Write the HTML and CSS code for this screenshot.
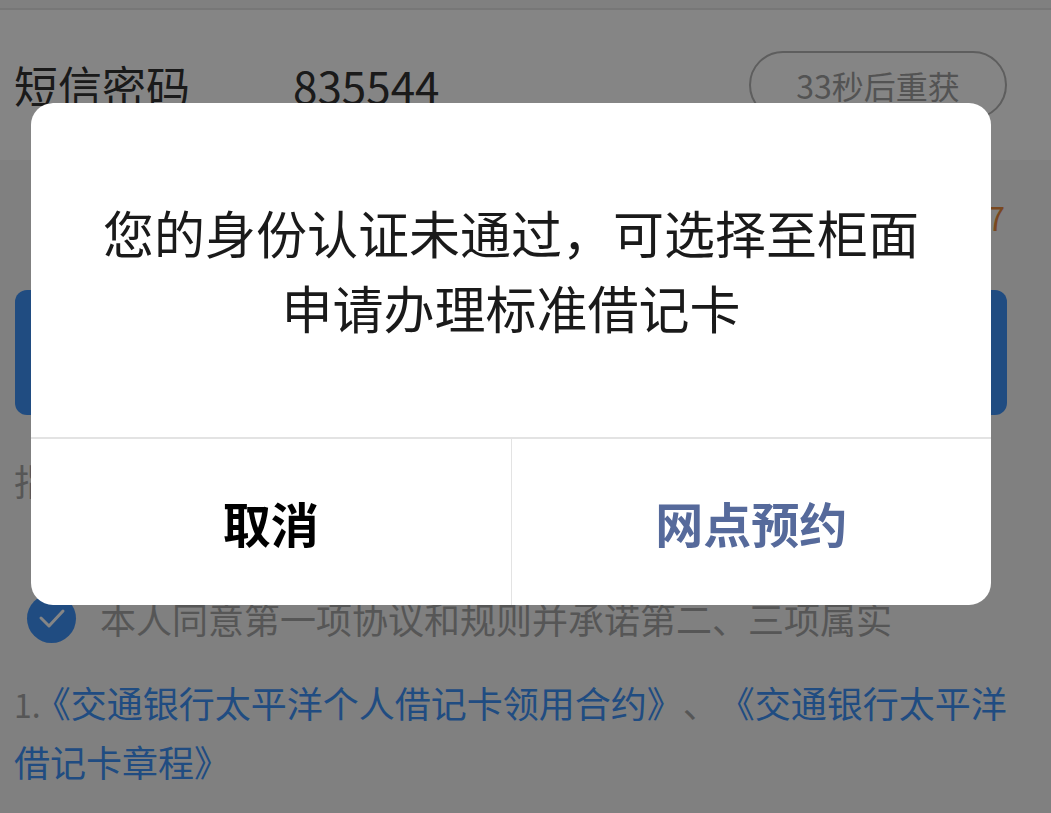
FILE: index.html
```html
<!DOCTYPE html>
<html lang="zh-CN">
<head>
    <meta charset="UTF-8">
    <meta name="viewport" content="width=device-width, initial-scale=1.0">
    <title>身份认证</title>
    <link rel="stylesheet" href="styles.css">
</head>
<body>
    <div class="status"></div>

    <div class="sms-row">
        <span class="sms-label">短信密码</span>
        <span class="sms-code">835544</span>
        <button class="resend">33秒后重获</button>
    </div>

    <div class="count">7</div>
    <button class="btn-next">下一步</button>

    <div class="hint">指</div>

    <div class="agree">
        <span class="check">
            <svg width="28" height="22" viewBox="0 0 28 22"><path d="M3 11 L11 19 L25 4" fill="none" stroke="#fff" stroke-width="3" stroke-linecap="round" stroke-linejoin="round"/></svg>
        </span>
        <span class="agree-text">本人同意第一项协议和规则并承诺第二、三项属实</span>
    </div>

    <p class="terms"><span class="num idx">1.</span><a href="#">《交通银行太平洋个人借记卡领用合约》</a><span class="num">、</span><a href="#">《交通银行太平洋借记卡章程》</a></p>

    <!-- dialog -->
    <div class="mask"></div>
    <div class="dialog">
        <div class="dialog-body">
            <p>您的身份认证未通过，可选择至柜面<br>申请办理标准借记卡</p>
        </div>
        <div class="dialog-actions">
            <button class="act cancel">取消</button>
            <button class="act ok">网点预约</button>
        </div>
    </div>
</body>
</html>
```

FILE: styles.css
```css
body {
    margin: 0;
    font-family: "Noto Sans CJK SC", "Noto Sans", sans-serif;
    background-color: #f5f5f5;
    color: #333;
    text-spacing-trim: space-all;
}
.status {
    height: 8px;
    border-bottom: 2px solid #e4e4e4;
}
.sms-row {
    display: flex;
    align-items: center;
    height: 150px;
    padding: 0 44px 0 14px;
    background-color: #fff;
}
.sms-label {
    width: 279px;
    font-size: 44px;
}
.sms-code {
    font-size: 44px;
}
.resend {
    margin-left: auto;
    width: 258px;
    height: 68px;
    border: 2px solid #b4b4b4;
    border-radius: 34px;
    background: none;
    color: #a0a0a0;
    font-family: inherit;
    font-size: 32px;
}
.count {
    height: 114px;
    line-height: 114px;
    padding-right: 46px;
    text-align: right;
    color: #e98a3c;
    font-size: 32px;
}
.btn-next {
    display: block;
    width: 992px;
    height: 125px;
    margin: 16px 0 0 15px;
    border: none;
    border-radius: 12px;
    background-color: #3e92f8;
    color: #fff;
    font-family: inherit;
    font-size: 40px;
}
.hint {
    margin-top: 40px;
    padding-left: 14px;
    font-size: 36px;
    line-height: 50px;
    color: #a6a6a6;
}
.agree {
    display: flex;
    align-items: center;
    gap: 24px;
    margin-top: 87px;
    padding-left: 27px;
}
.check {
    display: flex;
    align-items: center;
    justify-content: center;
    width: 49px;
    height: 49px;
    border-radius: 50%;
    background-color: #3e92f8;
}
.agree-text {
    font-size: 36px;
    color: #a6a6a6;
}
.terms {
    margin: 30px 0 0;
    padding: 0 14px;
    font-size: 36px;
    line-height: 57px;
}
.terms .num {
    color: #a6a6a6;
}
.terms .idx {
    font-size: 32px;
    margin-right: -6px;
}
.terms a {
    color: #3e92f8;
    text-decoration: none;
}
.mask {
    position: fixed;
    inset: 0;
    background-color: rgba(0, 0, 0, 0.48);
}
.dialog {
    position: fixed;
    top: 103px;
    left: 31px;
    width: 960px;
    height: 502px;
    display: flex;
    flex-direction: column;
    background-color: #fff;
    border-radius: 22px;
    overflow: hidden;
}
.dialog-body {
    height: 334px;
    display: flex;
    align-items: center;
    justify-content: center;
    border-bottom: 2px solid #e3e3e3;
}
.dialog-body p {
    margin: 0;
    text-align: center;
    font-size: 51px;
    line-height: 75px;
    color: #1a1a1a;
}
.dialog-actions {
    flex: 1;
    display: flex;
}
.act {
    flex: 1;
    border: none;
    background: none;
    font-family: inherit;
    font-size: 48px;
    font-weight: bold;
}
.cancel {
    border-right: 1px solid #e3e3e3;
    color: #000;
}
.ok {
    color: #566a9b;
}
```
